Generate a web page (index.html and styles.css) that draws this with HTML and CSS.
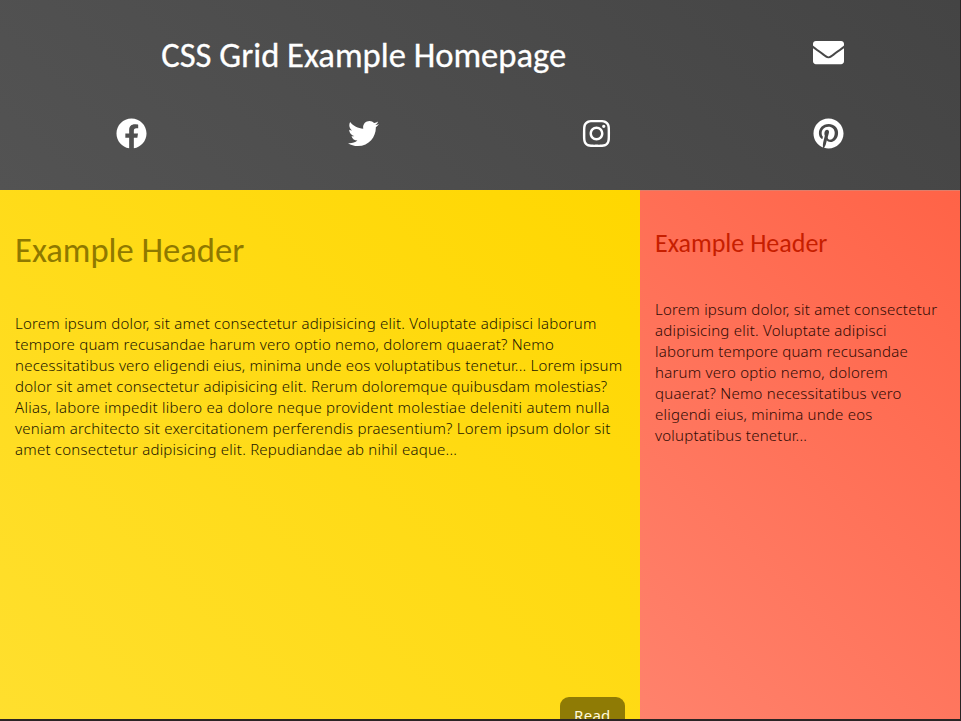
FILE: index.html
```html
<!DOCTYPE html>
<html lang="en">
<head>
<meta charset="utf-8">
<title>CSS Grid Example Homepage</title>
<link rel="stylesheet" href="styles.css">
</head>
<body>
<div class="page">
  <header class="top">
    <h1 class="title">CSS Grid Example Homepage</h1>
    <a class="icon mail"><svg viewBox="0 0 512 512"><path d="M502.3 190.8c3.9-3.1 9.7-.2 9.7 4.7V400c0 26.500-21.500 48-48 48H48c-26.500 0-48-21.500-48-48V195.600c0-5 5.700-7.800 9.700-4.700 22.400 17.400 52.100 39.500 154.100 113.600 21.100 15.400 56.700 47.800 92.200 47.600 35.700.3 72-32.800 92.300-47.600 102-74.100 131.600-96.300 154-113.700zM256 320c23.200.4 56.600-29.200 73.400-41.400 132.700-96.300 142.800-104.700 173.400-128.700 5.800-4.500 9.200-11.500 9.200-18.900v-19c0-26.500-21.500-48-48-48H48c-26.500 0-48 21.500-48 48v19c0 7.400 3.400 14.300 9.200 18.900 30.600 23.900 40.700 32.400 173.400 128.700 16.800 12.200 50.200 41.800 73.400 41.400z"/></svg></a>
    <a class="icon"><svg viewBox="0 0 512 512"><path d="M504 256C504 119 393 8 256 8S8 119 8 256c0 123.780 90.690 226.380 209.250 245V327.690h-63V256h63v-54.640c0-62.150 37-96.480 93.670-96.480 27.140 0 55.520 4.840 55.520 4.840v61h-31.280c-30.800 0-40.410 19.120-40.410 38.730V256h68.780l-11 71.690h-57.780V501C413.310 482.380 504 379.780 504 256z"/></svg></a>
    <a class="icon"><svg viewBox="0 0 512 512"><path d="M459.370 151.716c.325 4.548.325 9.097.325 13.645 0 138.720-105.583 298.558-298.558 298.558-59.452 0-114.680-17.219-161.137-47.106 8.447.974 16.568 1.299 25.340 1.299 49.055 0 94.213-16.568 130.274-44.832-46.132-.975-84.792-31.188-98.112-72.772 6.498.974 12.995 1.624 19.818 1.624 9.421 0 18.843-1.300 27.614-3.573-48.081-9.747-84.143-51.980-84.143-102.985v-1.299c13.969 7.797 30.214 12.670 47.431 13.319-28.264-18.843-46.781-51.005-46.781-87.391 0-19.492 5.197-37.360 14.294-52.954 51.655 63.675 129.300 105.258 216.365 109.807-1.624-7.797-2.599-15.918-2.599-24.040 0-57.828 46.782-104.934 104.934-104.934 30.213 0 57.502 12.670 76.670 33.137 23.715-4.548 46.456-13.320 66.599-25.340-7.798 24.366-24.366 44.833-46.132 57.827 21.117-2.273 41.584-8.122 60.426-16.243-14.292 20.791-32.161 39.308-52.628 54.253z"/></svg></a>
    <a class="icon"><svg viewBox="-32 0 512 512"><path d="M224.100 141c-63.600 0-114.900 51.300-114.900 114.900s51.300 114.900 114.900 114.900S339 319.500 339 255.900 287.700 141 224.100 141zm0 189.600c-41.100 0-74.700-33.500-74.700-74.700s33.500-74.700 74.700-74.700 74.700 33.500 74.700 74.700-33.600 74.700-74.700 74.700zm146.400-194.300c0 14.900-12 26.800-26.800 26.800-14.900 0-26.800-12-26.800-26.800s12-26.800 26.800-26.800 26.800 12 26.800 26.800zm76.100 27.200c-1.700-35.900-9.900-67.700-36.200-93.900-26.200-26.200-58-34.400-93.900-36.200-37-2.100-147.900-2.100-184.900 0-35.800 1.700-67.600 9.900-93.900 36.100s-34.400 58-36.200 93.900c-2.100 37-2.100 147.900 0 184.900 1.700 35.900 9.900 67.700 36.200 93.900s58 34.400 93.900 36.200c37 2.100 147.900 2.100 184.900 0 35.900-1.700 67.700-9.900 93.900-36.200 26.200-26.200 34.400-58 36.200-93.900 2.100-37 2.100-147.800 0-184.800zM398.800 388c-7.800 19.600-22.900 34.700-42.600 42.600-29.500 11.700-99.500 9-132.100 9s-102.700 2.600-132.100-9c-19.600-7.800-34.700-22.900-42.600-42.600-11.700-29.500-9-99.500-9-132.100s-2.600-102.700 9-132.100c7.800-19.600 22.900-34.700 42.600-42.600 29.500-11.700 99.500-9 132.100-9s102.700-2.600 132.100 9c19.600 7.800 34.700 22.900 42.600 42.600 11.700 29.500 9 99.500 9 132.100s2.700 102.700-9 132.100z"/></svg></a>
    <a class="icon"><svg viewBox="-8 0 512 512"><path d="M496 256c0 137-111 248-248 248-25.600 0-50.200-3.900-73.400-11.100 10.100-16.500 25.200-43.500 30.800-65 3-11.600 15.400-59 15.400-59 8.100 15.400 31.700 28.500 56.800 28.500 74.800 0 128.700-68.800 128.700-154.300 0-81.900-66.900-143.200-152.900-143.200-107 0-163.900 71.800-163.900 150.100 0 36.400 19.400 81.700 50.300 96.100 4.700 2.200 7.200 1.200 8.300-3.300.8-3.400 5-20.300 6.900-28.100.6-2.500.3-4.700-1.700-7.100-10.100-12.500-18.300-35.300-18.300-56.600 0-54.700 41.400-107.600 112-107.600 60.900 0 103.600 41.500 103.600 100.900 0 67.100-33.900 113.600-78 113.600-24.300 0-42.600-20.100-36.700-44.800 7-29.500 20.500-61.300 20.500-82.600 0-19-10.200-34.900-31.400-34.900-24.900 0-44.900 25.700-44.900 60.200 0 22 7.400 36.800 7.400 36.800s-24.500 103.800-29 123.200c-5 21.400-3 51.600-.9 71.200C65.400 450.900 0 361.100 0 256 0 119 111 8 248 8s248 111 248 248z"/></svg></a>
  </header>
  <main class="main">
    <h2 class="main-heading">Example Header</h2>
    <p class="copy"><span>Lorem ipsum dolor, sit amet consectetur adipisicing elit. Voluptate adipisci laborum</span> <span>tempore quam recusandae harum vero optio nemo, dolorem quaerat? Nemo</span> <span class="snug">necessitatibus vero eligendi eius, minima unde eos voluptatibus tenetur... Lorem ipsum</span> <span class="snug">dolor sit amet consectetur adipisicing elit. Rerum doloremque quibusdam molestias?</span> <span class="loose">Alias, labore impedit libero ea dolore neque provident molestiae deleniti autem nulla</span> <span>veniam architecto sit exercitationem perferendis praesentium? Lorem ipsum dolor sit</span> <span>amet consectetur adipisicing elit. Repudiandae ab nihil eaque...</span></p>
    <a class="read">Read More</a>
  </main>
  <aside class="side">
    <h3 class="side-heading">Example Header</h3>
    <p class="copy"><span>Lorem ipsum dolor, sit amet consectetur</span> <span>adipisicing elit. Voluptate adipisci</span> <span class="snug">laborum tempore quam recusandae</span> <span>harum vero optio nemo, dolorem</span> <span>quaerat? Nemo necessitatibus vero</span> <span>eligendi eius, minima unde eos</span> <span>voluptatibus tenetur...</span></p>
  </aside>
</div>
</body>
</html>
```
FILE: styles.css
```css
* { box-sizing: border-box; }
body {
  margin: 0;
  height: 721px;
  padding: 0 1px 2px 0;
  overflow: hidden;
  background: #2b2525;
  font-family: "Noto Sans", "Open Sans", sans-serif;
}
.page {
  display: grid;
  grid-template-columns: 2fr 1fr;
  grid-template-rows: 190px 529px;
  height: 719px;
  overflow: hidden;
}
.top {
  grid-column: 1 / -1;
  display: grid;
  grid-template-columns: repeat(4, 1fr);
  grid-template-rows: 80px 80px;
  padding: 15px;
  align-items: center;
  justify-items: center;
  background: linear-gradient(45deg, #535353, #444);
}
.title {
  grid-column: span 3;
  margin: 0;
  font: 400 34.6px/42px Carlito, Calibri, sans-serif;
  color: #fff;
  -webkit-text-stroke: 0.3px #fff;
}
.icon { display: block; height: 31px; color: #fff; margin-top: -3px; }
.mail { margin-top: -5px; }
.icon svg { display: block; width: 31px; height: 31px; fill: currentColor; }
.main, .side { padding: 0 15px; overflow: hidden; }
.main { position: relative; background: linear-gradient(45deg, #ffdf2e, #ffd700); }
.side {
  background: linear-gradient(45deg, #ff826c, #ff6347);
  border-top: 1px solid #df7e6b;
}
.main-heading {
  margin: 39px 0 42px;
  font: 400 34.6px/42px Carlito, Calibri, sans-serif;
  color: #8f7900;
}
.side-heading {
  margin: 36px 0 40px;
  font: 400 26px/32px Carlito, Calibri, sans-serif;
  color: #c71e00;
}
.copy {
  margin: 0;
  font-size: 15px;
  font-weight: 300;
  line-height: 21px;
  letter-spacing: 0.225px;
  color: #1c1600;
}
.side .copy { color: #300b04; }
.copy span { display: block; white-space: nowrap; }
.copy .snug { letter-spacing: 0.205px; }
.copy .loose { letter-spacing: 0.26px; }
.read {
  position: absolute;
  top: 507px;
  right: 15px;
  width: 65px;
  padding: 8px 14px;
  border-radius: 9px;
  background: #8f7b05;
  color: #fff9db;
  font-size: 15px;
  letter-spacing: 0.3px;
  line-height: 21px;
}
```
